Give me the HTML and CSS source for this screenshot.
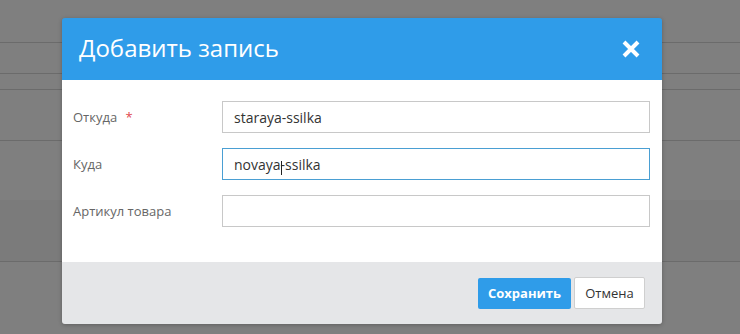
FILE: index.html
```html
<!DOCTYPE html>
<html lang="ru">

<head>
  <meta charset="UTF-8" />
  <meta name="viewport" content="width=device-width, initial-scale=1.0" />
  <title>Добавить запись</title>
  <link rel="stylesheet" href="styles.css">
</head>

<body>
  <div class="page">
    <div class="row row-top"></div>
    <div class="row row-a"></div>
    <div class="row row-b"></div>
    <div class="row row-c"></div>
    <div class="row row-d"></div>
    <div class="row row-e"></div>
    <div class="row row-f"></div>
  </div>

  <div class="modal">
    <div class="modal-header">
      <h1>Добавить запись</h1>
      <button class="close" aria-label="Закрыть">
        <svg width="18" height="18" viewBox="0 0 18 18">
          <path d="M2 2 L16 16 M16 2 L2 16" stroke="#fff" stroke-width="4" stroke-linecap="butt" />
        </svg>
      </button>
    </div>
    <div class="modal-body">
      <label for="otkuda">Откуда <span class="req">*</span></label>
      <input type="text" id="otkuda" value="staraya-ssilka">
      <label for="kuda">Куда</label>
      <div class="input-wrap">
        <input type="text" id="kuda" class="focused" value="novaya-ssilka">
        <span class="caret"></span>
      </div>
      <label for="artikul">Артикул товара</label>
      <input type="text" id="artikul" value="">
    </div>
    <div class="modal-footer">
      <button class="btn btn-save">Сохранить</button>
      <button class="btn btn-cancel">Отмена</button>
    </div>
  </div>
</body>

</html>
```

FILE: styles.css
```css
body {
  font-family: 'Open Sans', 'Liberation Sans', sans-serif;
  margin: 0;
  padding: 0;
  background-color: #7f7f7f;
  height: 334px;
  overflow: hidden;
}

.page {
  display: flex;
  flex-direction: column;
}

.row {
  border-bottom: 1px solid #6b6b6b;
}

.row-top {
  height: 42px;
}

.row-a {
  height: 30px;
}

.row-b {
  height: 15px;
}

.row-c {
  height: 50px;
}

.row-d {
  height: 59px;
  border-bottom: none;
}

.row-e {
  height: 61px;
  background-color: #7b7b7b;
}

.row-f {
  height: 72px;
  border-bottom: none;
}

.modal {
  position: absolute;
  top: 18px;
  left: 62px;
  width: 600px;
  border-radius: 3px;
  overflow: hidden;
  box-shadow: 0 1px 4px rgba(0, 0, 0, 0.25);
}

.modal-header {
  background-color: #2f9ce9;
  height: 62px;
  display: flex;
  align-items: center;
  justify-content: space-between;
  padding: 0 22px 0 17px;
}

.modal-header h1 {
  margin: 0;
  font-size: 24px;
  font-weight: 400;
  color: #fff;
  line-height: 1;
  padding-bottom: 2px;
}

.close {
  background: none;
  border: none;
  padding: 0;
  width: 18px;
  height: 18px;
  cursor: pointer;
  display: block;
}

.close svg {
  display: block;
}

.modal-body {
  background-color: #fff;
  display: grid;
  grid-template-columns: 149px 1fr;
  row-gap: 15px;
  align-items: center;
  padding: 21px 12px 35px 11px;
}

.modal-body label {
  font-size: 13px;
  color: #666;
}

.req {
  color: #e0474c;
  margin-left: 5px;
}

.modal-body input {
  height: 32px;
  box-sizing: border-box;
  border: 1px solid #c8c8c8;
  padding: 0 11px;
  font-family: inherit;
  font-size: 14px;
  color: #333;
  outline: none;
  width: 100%;
  display: block;
}

.modal-body input.focused {
  border-color: #4a9fd3;
}

.input-wrap {
  position: relative;
}

.caret {
  position: absolute;
  left: 59px;
  top: 13px;
  width: 1px;
  height: 14px;
  background-color: #222;
}

.modal-footer {
  background-color: #e5e6e8;
  height: 62px;
  display: flex;
  justify-content: flex-end;
  align-items: center;
  gap: 3px;
  padding-right: 17px;
}

.btn {
  font-family: inherit;
  font-size: 13px;
  border-radius: 2px;
  cursor: pointer;
  height: 32px;
}

.btn-save {
  background-color: #2f9ce9;
  border: none;
  color: #fff;
  font-weight: 700;
  width: 93px;
  height: 31px;
}

.btn-cancel {
  background-color: #fff;
  border: 1px solid #cfcfcf;
  color: #333;
  width: 71px;
}
```
